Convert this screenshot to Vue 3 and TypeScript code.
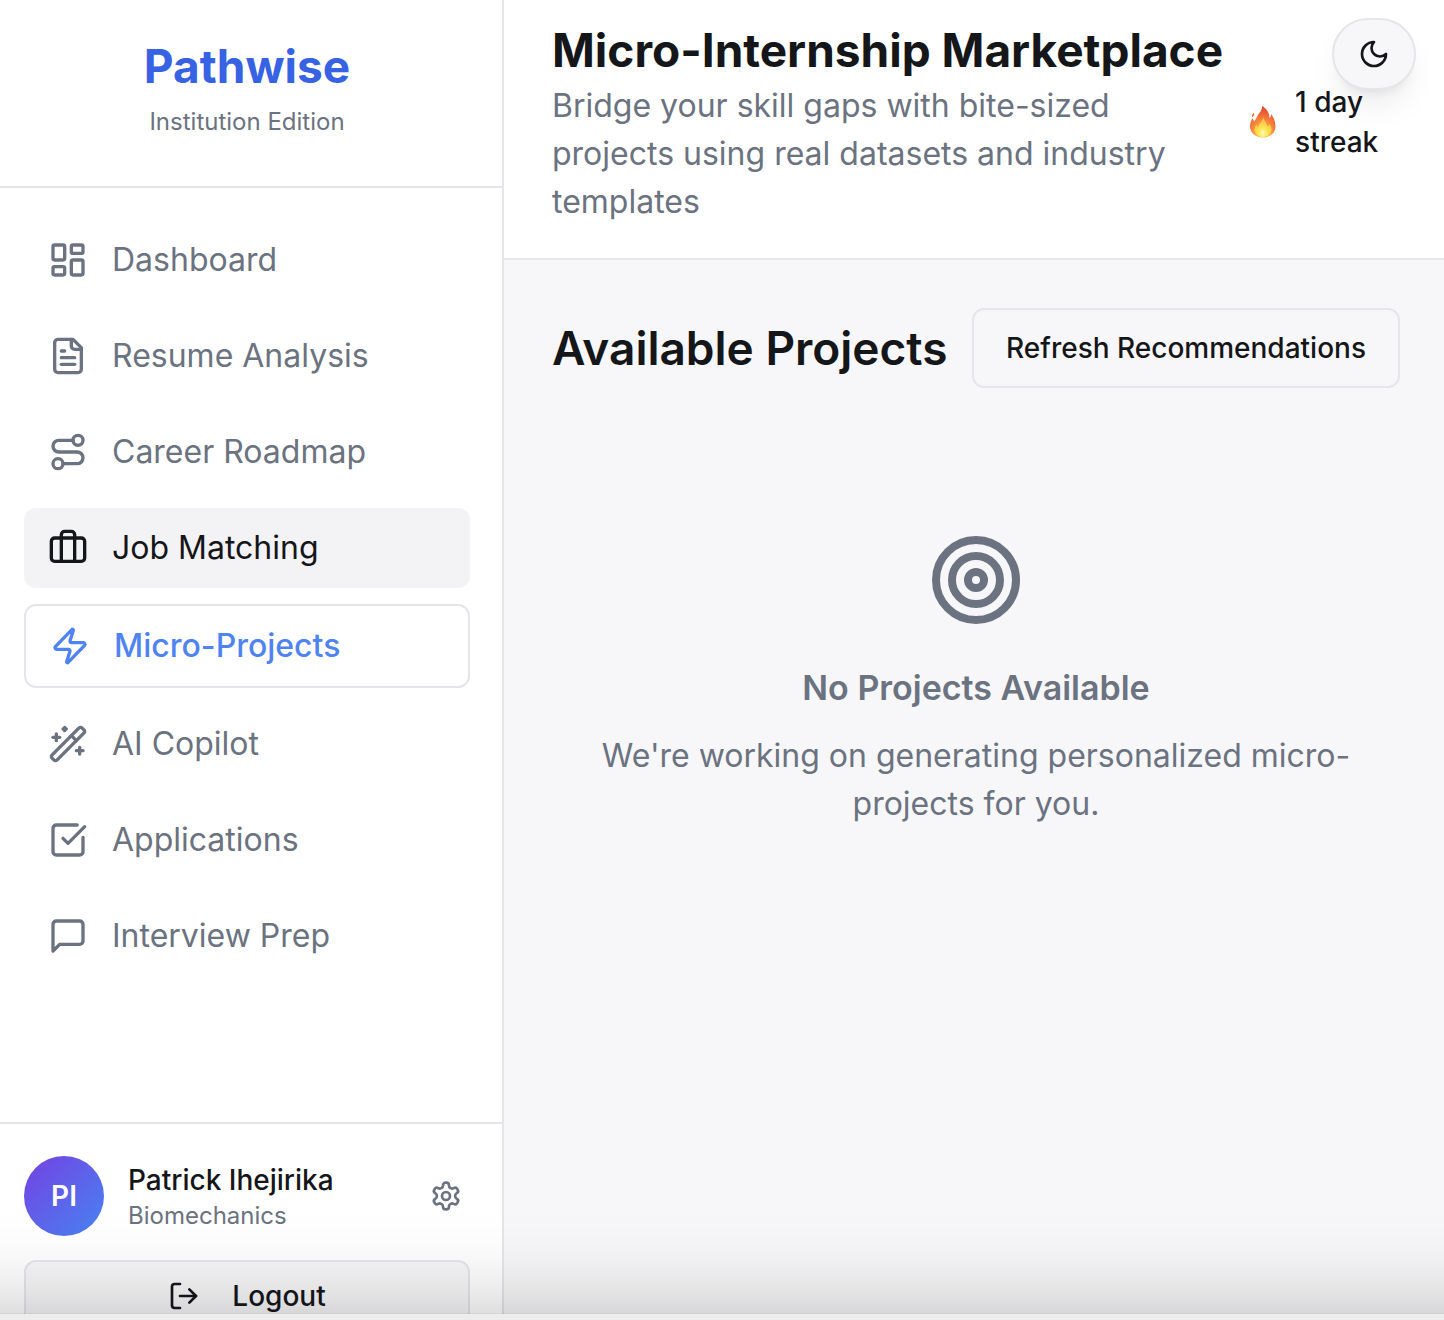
<script setup lang="ts">
interface NavItem {
  label: string
  icon: string
  state?: 'hover' | 'active'
}

const navItems: NavItem[] = [
  {
    label: 'Dashboard',
    icon: '<rect width="7" height="9" x="3" y="3" rx="1"/><rect width="7" height="5" x="14" y="3" rx="1"/><rect width="7" height="9" x="14" y="12" rx="1"/><rect width="7" height="5" x="3" y="16" rx="1"/>',
  },
  {
    label: 'Resume Analysis',
    icon: '<path d="M15 2H6a2 2 0 0 0-2 2v16a2 2 0 0 0 2 2h12a2 2 0 0 0 2-2V7Z"/><path d="M14 2v4a2 2 0 0 0 2 2h4"/><path d="M10 9H8"/><path d="M16 13H8"/><path d="M16 17H8"/>',
  },
  {
    label: 'Career Roadmap',
    icon: '<circle cx="6" cy="19" r="3"/><path d="M9 19h8.5a3.5 3.5 0 0 0 0-7h-11a3.5 3.5 0 0 1 0-7H15"/><circle cx="18" cy="5" r="3"/>',
  },
  {
    label: 'Job Matching',
    state: 'hover',
    icon: '<path d="M16 20V4a2 2 0 0 0-2-2h-4a2 2 0 0 0-2 2v16"/><rect width="20" height="14" x="2" y="6" rx="2"/>',
  },
  {
    label: 'Micro-Projects',
    state: 'active',
    icon: '<path d="M4 14a1 1 0 0 1-.78-1.63l9.9-10.2a.5.5 0 0 1 .86.46l-1.92 6.02A1 1 0 0 0 13 10h7a1 1 0 0 1 .78 1.63l-9.9 10.2a.5.5 0 0 1-.86-.46l1.92-6.02A1 1 0 0 0 11 14z"/>',
  },
  {
    label: 'AI Copilot',
    icon: '<path d="m21.64 3.64-1.28-1.28a1.21 1.21 0 0 0-1.72 0L2.36 18.64a1.21 1.21 0 0 0 0 1.72l1.28 1.28a1.2 1.2 0 0 0 1.72 0L21.64 5.36a1.2 1.2 0 0 0 0-1.72"/><path d="m14 7 3 3"/><path d="M5 6v4"/><path d="M19 14v4"/><path d="M10 2v2"/><path d="M7 8H3"/><path d="M21 16h-4"/><path d="M11 3H9"/>',
  },
  {
    label: 'Applications',
    icon: '<path d="M21 10.5V19a2 2 0 0 1-2 2H5a2 2 0 0 1-2-2V5a2 2 0 0 1 2-2h12.5"/><path d="m9 11 3 3L22 4"/>',
  },
  {
    label: 'Interview Prep',
    icon: '<path d="M21 15a2 2 0 0 1-2 2H7l-4 4V5a2 2 0 0 1 2-2h14a2 2 0 0 1 2 2z"/>',
  },
]
</script>

<template>
  <div class="screen">
    <div class="app">
      <aside class="sidebar">
        <div class="brand">
          <div class="brand-name">Pathwise</div>
          <div class="brand-edition">Institution Edition</div>
        </div>

        <nav class="nav" aria-label="Main">
          <a
            v-for="item in navItems"
            :key="item.label"
            href="#"
            class="nav-item"
            :class="item.state"
            :aria-current="item.state === 'active' ? 'page' : undefined"
          >
            <svg class="icon nav-icon" viewBox="0 0 24 24" aria-hidden="true" v-html="item.icon"></svg>
            <span>{{ item.label }}</span>
          </a>
        </nav>

        <div class="account">
          <div class="profile">
            <div class="avatar">PI</div>
            <div class="person">
              <div class="person-name">Patrick Ihejirika</div>
              <div class="person-field">Biomechanics</div>
            </div>
            <button class="settings" type="button" aria-label="Settings">
              <svg class="icon small-icon" viewBox="0 0 24 24" aria-hidden="true">
                <path d="M12.22 2h-.44a2 2 0 0 0-2 2v.18a2 2 0 0 1-1 1.73l-.43.25a2 2 0 0 1-2 0l-.15-.08a2 2 0 0 0-2.73.73l-.22.38a2 2 0 0 0 .73 2.73l.15.1a2 2 0 0 1 1 1.72v.51a2 2 0 0 1-1 1.74l-.15.09a2 2 0 0 0-.73 2.73l.22.38a2 2 0 0 0 2.73.73l.15-.08a2 2 0 0 1 2 0l.43.25a2 2 0 0 1 1 1.73V20a2 2 0 0 0 2 2h.44a2 2 0 0 0 2-2v-.18a2 2 0 0 1 1-1.73l.43-.25a2 2 0 0 1 2 0l.15.08a2 2 0 0 0 2.73-.73l.22-.39a2 2 0 0 0-.73-2.73l-.15-.08a2 2 0 0 1-1-1.74v-.5a2 2 0 0 1 1-1.74l.15-.09a2 2 0 0 0 .73-2.73l-.22-.38a2 2 0 0 0-2.73-.73l-.15.08a2 2 0 0 1-2 0l-.43-.25a2 2 0 0 1-1-1.73V4a2 2 0 0 0-2-2z" />
                <circle cx="12" cy="12" r="3" />
              </svg>
            </button>
          </div>
          <button class="button logout" type="button">
            <svg class="icon small-icon" viewBox="0 0 24 24" aria-hidden="true">
              <path d="M9 21H5a2 2 0 0 1-2-2V5a2 2 0 0 1 2-2h4" />
              <path d="m16 17 5-5-5-5" />
              <path d="M21 12H9" />
            </svg>
            Logout
          </button>
        </div>
      </aside>

      <div class="content">
        <header class="page-header">
          <div class="page-intro">
            <h1>Micro-Internship Marketplace</h1>
            <p>Bridge your skill gaps with bite-sized projects using real datasets and industry templates</p>
          </div>
          <div class="streak">
            <svg class="flame" viewBox="0 0 28 34" aria-hidden="true">
              <defs>
                <radialGradient id="flame-outer" cx="50%" cy="88%" r="85%">
                  <stop offset="0" stop-color="#ffd34a" />
                  <stop offset="0.4" stop-color="#fb9a3c" />
                  <stop offset="0.75" stop-color="#ee6338" />
                  <stop offset="1" stop-color="#e2492f" />
                </radialGradient>
                <radialGradient id="flame-inner" cx="50%" cy="80%" r="70%">
                  <stop offset="0" stop-color="#fffbd0" />
                  <stop offset="0.35" stop-color="#ffe74f" />
                  <stop offset="1" stop-color="#fdb850" />
                </radialGradient>
              </defs>
              <path fill="url(#flame-outer)" d="M13 1c4 2 7.500 6.500 7.500 12 1-.8 1.600-2.200 1.500-4 2.300 3 4.500 7 4.500 12.500C26.500 28 21 32.500 14 32.500S1 28 1 21.500c0-3.500 1.500-6 2.300-8.500.9 1.200 1.400 2.300 1.700 3.600C7 14.500 7.500 12.500 9 10c1.800-3 4.500-5 4-9z" />
              <path fill="#ee6338" d="M4.800 8c.8 1.700.2 3-1.600 4.200C2.600 10.500 3.200 9 4.800 8z" />
              <path fill="url(#flame-inner)" d="M14.300 12c.3 3.500 3.700 5.500 4.200 9.500.9-.7 1.400-1.500 1.700-2.800 1.700 2 2.600 4 2.300 6.300-.5 4.500-4 7-8.500 7s-8.300-2.500-8.500-6.500c-.1-2.500.8-4.400 1.700-6 .6 1.200 1 2 1.800 2.800 1-4 4.800-6 5.300-10.300z" />
            </svg>
            <span>1 day streak</span>
          </div>
        </header>

        <main class="main">
          <div class="section-head">
            <h2>Available Projects</h2>
            <button class="button refresh" type="button">Refresh Recommendations</button>
          </div>
          <section class="empty">
            <svg class="icon target" viewBox="0 0 24 24" aria-hidden="true">
              <circle cx="12" cy="12" r="10" />
              <circle cx="12" cy="12" r="6" />
              <circle cx="12" cy="12" r="2" />
            </svg>
            <h3>No Projects Available</h3>
            <p>We're working on generating personalized micro-projects for you.</p>
          </section>
        </main>
      </div>

      <button class="theme-toggle" type="button" aria-label="Toggle dark mode">
        <svg class="icon small-icon" viewBox="0 0 24 24" aria-hidden="true">
          <path d="M12 3a6 6 0 0 0 9 9 9 9 0 1 1-9-9Z" />
        </svg>
      </button>
    </div>
    <div class="dock-edge"></div>
  </div>
</template>

<style>
body {
  margin: 0;
}
</style>

<style scoped>
.screen {
  --ink: #15161a;
  --muted: #6b7280;
  --line: #e5e5ea;
  --surface: #f7f7f9;
  display: flex;
  flex-direction: column;
  height: 100vh;
  overflow: hidden;
  font-family: Inter, 'Liberation Sans', sans-serif;
  font-size: 32px;
  line-height: 48px;
  color: var(--ink);
  background: #fff;
}

.screen *,
.screen *::after {
  box-sizing: border-box;
}

h1,
h2,
h3,
p {
  margin: 0;
}

button {
  font: inherit;
  color: inherit;
  cursor: pointer;
}

.icon {
  flex: none;
  fill: none;
  stroke: currentColor;
  stroke-width: 2;
  stroke-linecap: round;
  stroke-linejoin: round;
}

.small-icon {
  width: 32px;
  height: 32px;
}

.app {
  position: relative;
  display: flex;
  flex: 1;
  min-height: 0;
  overflow: hidden;
}

/* Shade cast upward by the bar along the bottom edge */
.app::after {
  content: '';
  position: absolute;
  inset: auto 0 0;
  height: 104px;
  pointer-events: none;
  border-bottom: 1px solid rgba(0, 0, 0, 0.16);
  background: linear-gradient(
    to top,
    rgba(0, 0, 0, 0.13),
    rgba(0, 0, 0, 0.093) 13%,
    rgba(0, 0, 0, 0.06) 32%,
    rgba(0, 0, 0, 0.03) 50%,
    rgba(0, 0, 0, 0.012) 67%,
    transparent
  );
}

.dock-edge {
  flex: none;
  height: 6px;
  background: #ededed;
}

/* Sidebar */
.sidebar {
  flex: none;
  width: 504px;
  border-right: 2px solid var(--line);
}

.brand {
  padding: 34px 32px 48px 24px;
  border-bottom: 2px solid var(--line);
  text-align: center;
}

.brand-name {
  margin-bottom: 8px;
  font-size: 46px;
  line-height: 64px;
  font-weight: 700;
  color: #3662e3;
}

.brand-edition {
  font-size: 24px;
  line-height: 32px;
  color: var(--muted);
}

.nav {
  display: flex;
  flex-direction: column;
  gap: 16px;
  padding: 32px 32px 146px 24px;
}

.nav-item {
  display: flex;
  align-items: center;
  gap: 24px;
  padding: 16px 24px;
  border-radius: 12px;
  color: var(--muted);
  text-decoration: none;
}

.nav-item.hover {
  color: var(--ink);
  background: #f3f3f5;
}

.nav-item.active {
  border: 2px solid var(--line);
  font-weight: 500;
  color: #4f83f1;
}

.nav-icon {
  width: 40px;
  height: 40px;
}

.account {
  padding: 32px 32px 32px 24px;
  border-top: 2px solid var(--line);
}

.profile {
  display: flex;
  align-items: center;
  gap: 24px;
  margin-bottom: 24px;
}

.avatar {
  display: flex;
  flex: none;
  align-items: center;
  justify-content: center;
  width: 80px;
  height: 80px;
  border-radius: 50%;
  font-size: 28px;
  font-weight: 600;
  color: #fff;
  background: linear-gradient(135deg, #7541e2, #4684f2);
}

.person {
  flex: 1;
  min-width: 0;
}

.person-name {
  font-size: 28px;
  line-height: 40px;
  font-weight: 500;
}

.person-field {
  font-size: 24px;
  line-height: 32px;
  color: var(--muted);
}

.settings {
  display: flex;
  padding: 8px;
  border: 0;
  color: var(--muted);
  background: none;
}

.button {
  border: 2px solid var(--line);
  border-radius: 12px;
  font-size: 28px;
  line-height: 40px;
  font-weight: 500;
  background: var(--surface);
}

.logout {
  display: flex;
  align-items: center;
  justify-content: center;
  gap: 32px;
  width: 100%;
  padding: 14px 24px;
}

/* Page */
.content {
  display: flex;
  flex: 1;
  flex-direction: column;
  min-width: 0;
  background: var(--surface);
}

.page-header {
  display: flex;
  align-items: center;
  justify-content: space-between;
  gap: 26px;
  padding: 18px 48px 32px;
  border-bottom: 2px solid var(--line);
  background: #fff;
}

.page-intro {
  flex: 1;
}

h1 {
  font-size: 46px;
  line-height: 64px;
  font-weight: 700;
  white-space: nowrap;
}

.page-intro p,
.empty p {
  color: var(--muted);
}

.streak {
  display: flex;
  flex: none;
  align-items: center;
  gap: 18px;
  width: 148px;
  font-size: 28px;
  line-height: 40px;
  font-weight: 500;
}

.flame {
  flex: none;
  width: 28px;
  height: 34px;
}

.main {
  padding: 48px 44px 48px 48px;
}

.section-head {
  display: flex;
  align-items: center;
  justify-content: space-between;
}

h2 {
  font-size: 46px;
  line-height: 64px;
  font-weight: 600;
  white-space: nowrap;
}

.refresh {
  padding: 18px 32px;
  white-space: nowrap;
}

.empty {
  display: flex;
  flex-direction: column;
  align-items: center;
  margin-top: 48px;
  padding: 96px 48px;
  text-align: center;
  color: var(--muted);
}

.target {
  width: 96px;
  height: 96px;
  margin-bottom: 32px;
}

h3 {
  margin-bottom: 16px;
  font-size: 34px;
  line-height: 56px;
  font-weight: 600;
}

.theme-toggle {
  position: absolute;
  top: 18px;
  right: 28px;
  display: flex;
  align-items: center;
  justify-content: center;
  width: 84px;
  height: 72px;
  border: 2px solid var(--line);
  border-radius: 36px;
  background: var(--surface);
  box-shadow:
    0 20px 30px -6px rgba(0, 0, 0, 0.08),
    0 8px 12px -8px rgba(0, 0, 0, 0.1);
}
</style>
